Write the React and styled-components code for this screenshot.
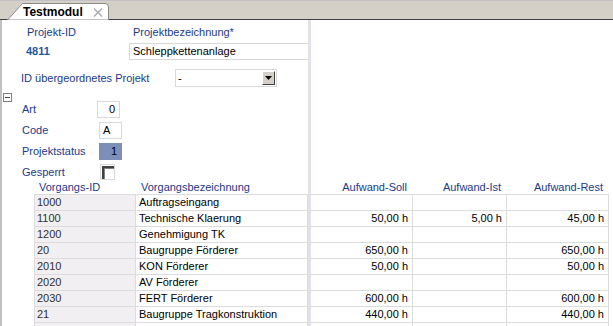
import styled, { createGlobalStyle } from "styled-components";

const GlobalStyle = createGlobalStyle`
  html, body {
    margin: 0;
    padding: 0;
    background: #fff;
  }
  body {
    font-family: "Liberation Sans", Arial, sans-serif;
    font-size: 11px;
    color: #000;
  }
`;

const rows = [
  { id: "1000", name: "Auftragseingang", soll: "", ist: "", rest: "" },
  { id: "1100", name: "Technische Klaerung", soll: "50,00 h", ist: "5,00 h", rest: "45,00 h" },
  { id: "1200", name: "Genehmigung TK", soll: "", ist: "", rest: "" },
  { id: "20", name: "Baugruppe Förderer", soll: "650,00 h", ist: "", rest: "650,00 h" },
  { id: "2010", name: "KON Förderer", soll: "50,00 h", ist: "", rest: "50,00 h" },
  { id: "2020", name: "AV Förderer", soll: "", ist: "", rest: "" },
  { id: "2030", name: "FERT Förderer", soll: "600,00 h", ist: "", rest: "600,00 h" },
  { id: "21", name: "Baugruppe Tragkonstruktion", soll: "440,00 h", ist: "", rest: "440,00 h" },
  { id: "", name: "", soll: "", ist: "", rest: "" },
];

function App() {
  return (
    <>
      <GlobalStyle />
      <Window>
        <TabBar>
          <Tab>
            <TabShape viewBox="0 0 103 17" preserveAspectRatio="none">
              <path d="M0.5 17 L15.5 0.5 L98 0.5 Q101.5 0.5 101.5 4 L101.5 17 Z" fill="#fff" stroke="#8a8a8a" />
            </TabShape>
            <TabLabel>Testmodul</TabLabel>
            <TabClose>
              <svg width="10" height="9" viewBox="0 0 10 9">
                <path d="M1 0.5 L9 8.5 M9 0.5 L1 8.5" stroke="#a8a8a8" strokeWidth="1.3" />
              </svg>
            </TabClose>
          </Tab>
        </TabBar>

        <Main>
          <Form>
            <TopGrid>
              <Label $pad={25} $top={6}>Projekt-ID</Label>
              <Label $pad={4} $top={6}>Projektbezeichnung*</Label>
              <IdValue>4811</IdValue>
              <TextBox>Schleppkettenanlage</TextBox>
            </TopGrid>

            <ParentRow>
              <Label $pad={19}>ID übergeordnetes Projekt</Label>
              <Select>
                <span>-</span>
                <SelectButton>
                  <svg width="7" height="4" viewBox="0 0 7 4">
                    <path d="M0 0 H7 L3.5 4 Z" fill="#000" />
                  </svg>
                </SelectButton>
              </Select>
            </ParentRow>

            <Section>
              <Collapse>
                <svg width="9" height="9" viewBox="0 0 9 9">
                  <rect x="0.5" y="0.5" width="8" height="8" fill="#fff" stroke="#808080" />
                  <path d="M2 4.5 H7" stroke="#404040" />
                </svg>
              </Collapse>
              <Fields>
                <FieldRow>
                  <FieldLabel>Art</FieldLabel>
                  <ValueBox $shift={-2} $align="right">0</ValueBox>
                </FieldRow>
                <FieldRow>
                  <FieldLabel>Code</FieldLabel>
                  <ValueBox>A</ValueBox>
                </FieldRow>
                <FieldRow>
                  <FieldLabel>Projektstatus</FieldLabel>
                  <ValueBox $filled $align="right">1</ValueBox>
                </FieldRow>
                <FieldRow>
                  <FieldLabel>Gesperrt</FieldLabel>
                  <CheckBox />
                </FieldRow>
              </Fields>
            </Section>
          </Form>

          <Splitter />

          <Blank />

          <LeftTable>
            <HeadCell $pad={5}>Vorgangs-ID</HeadCell>
            <HeadCell $pad={5}>Vorgangsbezeichnung</HeadCell>
            {rows.map((r, i) => (
              <RowGroup key={i}>
                <IdCell>{r.id}</IdCell>
                <Cell>{r.name}</Cell>
              </RowGroup>
            ))}
          </LeftTable>

          <RightTable>
            <HeadCell $right>Aufwand-Soll</HeadCell>
            <HeadCell $right>Aufwand-Ist</HeadCell>
            <HeadCell $right>Aufwand-Rest</HeadCell>
            {rows.map((r, i) => (
              <RowGroup key={i}>
                <NumCell>{r.soll}</NumCell>
                <NumCell>{r.ist}</NumCell>
                <NumCell>{r.rest}</NumCell>
              </RowGroup>
            ))}
          </RightTable>
        </Main>
      </Window>
    </>
  );
}

const Window = styled.div`
  width: 613px;
  height: 326px;
  overflow: hidden;
  background: #fff;
`;

const TabBar = styled.div`
  height: 20px;
  background: #d4d0c8;
  border-top: 1px solid #c4c0c8;
  box-sizing: border-box;
  border-bottom: 1px solid #404040;
  display: flex;
  align-items: flex-end;
  padding-left: 7px;
`;

const Tab = styled.div`
  position: relative;
  width: 103px;
  height: 17px;
  margin-bottom: -1px;
  display: flex;
  align-items: center;
  padding-left: 16px;
  box-sizing: border-box;
  gap: 10px;
`;

const TabShape = styled.svg`
  position: absolute;
  left: 0;
  top: 0;
  width: 103px;
  height: 17px;
`;

const TabLabel = styled.span`
  position: relative;
  font-weight: bold;
  font-size: 12px;
  line-height: 14px;
  color: #000;
`;

const TabClose = styled.span`
  position: relative;
  display: flex;
  margin-top: 1px;
`;

const Main = styled.div`
  display: grid;
  grid-template-columns: 306px 3px 1fr;
  grid-template-rows: 159px auto;
  grid-template-areas:
    "form split blank"
    "tl split tr";
  border-left: 2px solid #c0c0c0;
  height: 306px;
`;

const Form = styled.div`
  grid-area: form;
  display: flex;
  flex-direction: column;
`;

const Splitter = styled.div`
  grid-area: split;
  background: #e4e0e8;
`;

const Blank = styled.div`
  grid-area: blank;
`;

const TopGrid = styled.div`
  display: grid;
  grid-template-columns: 127px 1fr;
  grid-template-rows: 23px 17px;
  align-items: center;
`;

const Label = styled.div`
  color: #1a3a8c;
  line-height: 13px;
  padding-left: ${(p) => p.$pad || 0}px;
  align-self: ${(p) => (p.$top ? "start" : "center")};
  padding-top: ${(p) => p.$top || 0}px;
  white-space: nowrap;
`;

const IdValue = styled.div`
  color: #1f58a4;
  font-weight: bold;
  padding-left: 24px;
  line-height: 13px;
`;

const TextBox = styled.div`
  height: 17px;
  box-sizing: border-box;
  border: 1px solid #d8d8d8;
  border-right: none;
  padding-left: 3px;
  line-height: 15px;
`;

const ParentRow = styled.div`
  display: grid;
  grid-template-columns: 173px 102px;
  align-items: center;
  margin-top: 9px;
  height: 18px;
`;

const Select = styled.div`
  height: 18px;
  box-sizing: border-box;
  border: 1px solid #d8d8d8;
  display: flex;
  align-items: center;
  justify-content: space-between;
  padding-left: 2px;
  padding-right: 1px;
  line-height: 14px;
`;

const SelectButton = styled.div`
  width: 13px;
  height: 14px;
  box-sizing: border-box;
  background: #d4d0c8;
  border: 1px solid;
  border-color: #fff #404040 #404040 #fff;
  display: flex;
  align-items: center;
  justify-content: center;
`;

const Section = styled.div`
  display: flex;
  margin-top: 6px;
`;

const Collapse = styled.div`
  width: 9px;
  height: 9px;
  margin-left: 1px;
  display: flex;
`;

const Fields = styled.div`
  display: flex;
  flex-direction: column;
  gap: 1px;
  margin-top: 6px;
  margin-left: 10px;
`;

const FieldRow = styled.div`
  display: flex;
  align-items: center;
  height: 20px;
`;

const FieldLabel = styled.div`
  width: 77px;
  color: #1a3a8c;
  line-height: 13px;
`;

const ValueBox = styled.div`
  width: 23px;
  height: 17px;
  box-sizing: border-box;
  margin-left: ${(p) => p.$shift || 0}px;
  border: 1px solid ${(p) => (p.$filled ? "#7b8fb9" : "#d8d8d8")};
  background: ${(p) => (p.$filled ? "#7b8fb9" : "#fff")};
  text-align: ${(p) => p.$align || "left"};
  padding: 0 4px 0 3px;
  line-height: 15px;
`;

const CheckBox = styled.div`
  width: 15px;
  height: 16px;
  margin-left: 1px;
  box-sizing: border-box;
  border: 1px solid #d8d8d8;
  background: #fff;
  &::before {
    content: "";
    display: block;
    width: 12px;
    height: 13px;
    margin: 1px 0 0 1px;
    box-sizing: border-box;
    border-top: 2px solid #404040;
    border-left: 2px solid #404040;
    box-shadow: inset 1px 1px 0 #808080;
  }
`;

const LeftTable = styled.div`
  grid-area: tl;
  display: grid;
  grid-template-columns: 102px 1fr;
  grid-template-rows: 16px;
  grid-auto-rows: 16px;
  margin-left: 32px;
`;

const RightTable = styled.div`
  grid-area: tr;
  display: grid;
  grid-template-columns: 102px 94px 102px;
  grid-template-rows: 16px;
  grid-auto-rows: 16px;
  width: 298px;
`;

const RowGroup = styled.div`
  display: contents;
`;

const HeadCell = styled.div`
  color: #1a3a8c;
  line-height: 16px;
  white-space: nowrap;
  padding-left: ${(p) => p.$pad || 0}px;
  padding-right: ${(p) => (p.$right ? 6 : 0)}px;
  text-align: ${(p) => (p.$right ? "right" : "left")};
  border-bottom: 1px solid #dcdcdc;
`;

const Cell = styled.div`
  line-height: 15px;
  white-space: nowrap;
  overflow: hidden;
  padding-left: 3px;
  border-bottom: 1px solid #dcdcdc;
  border-right: 1px solid #dcdcdc;
  background: #fff;
`;

const IdCell = styled(Cell)`
  padding-left: 2px;
  color: #303030;
  background: #f2eff2;
  border-left: 1px solid #dcdcdc;
`;

const NumCell = styled(Cell)`
  text-align: right;
  padding: 0 4px 0 0;
`;

export default App;
